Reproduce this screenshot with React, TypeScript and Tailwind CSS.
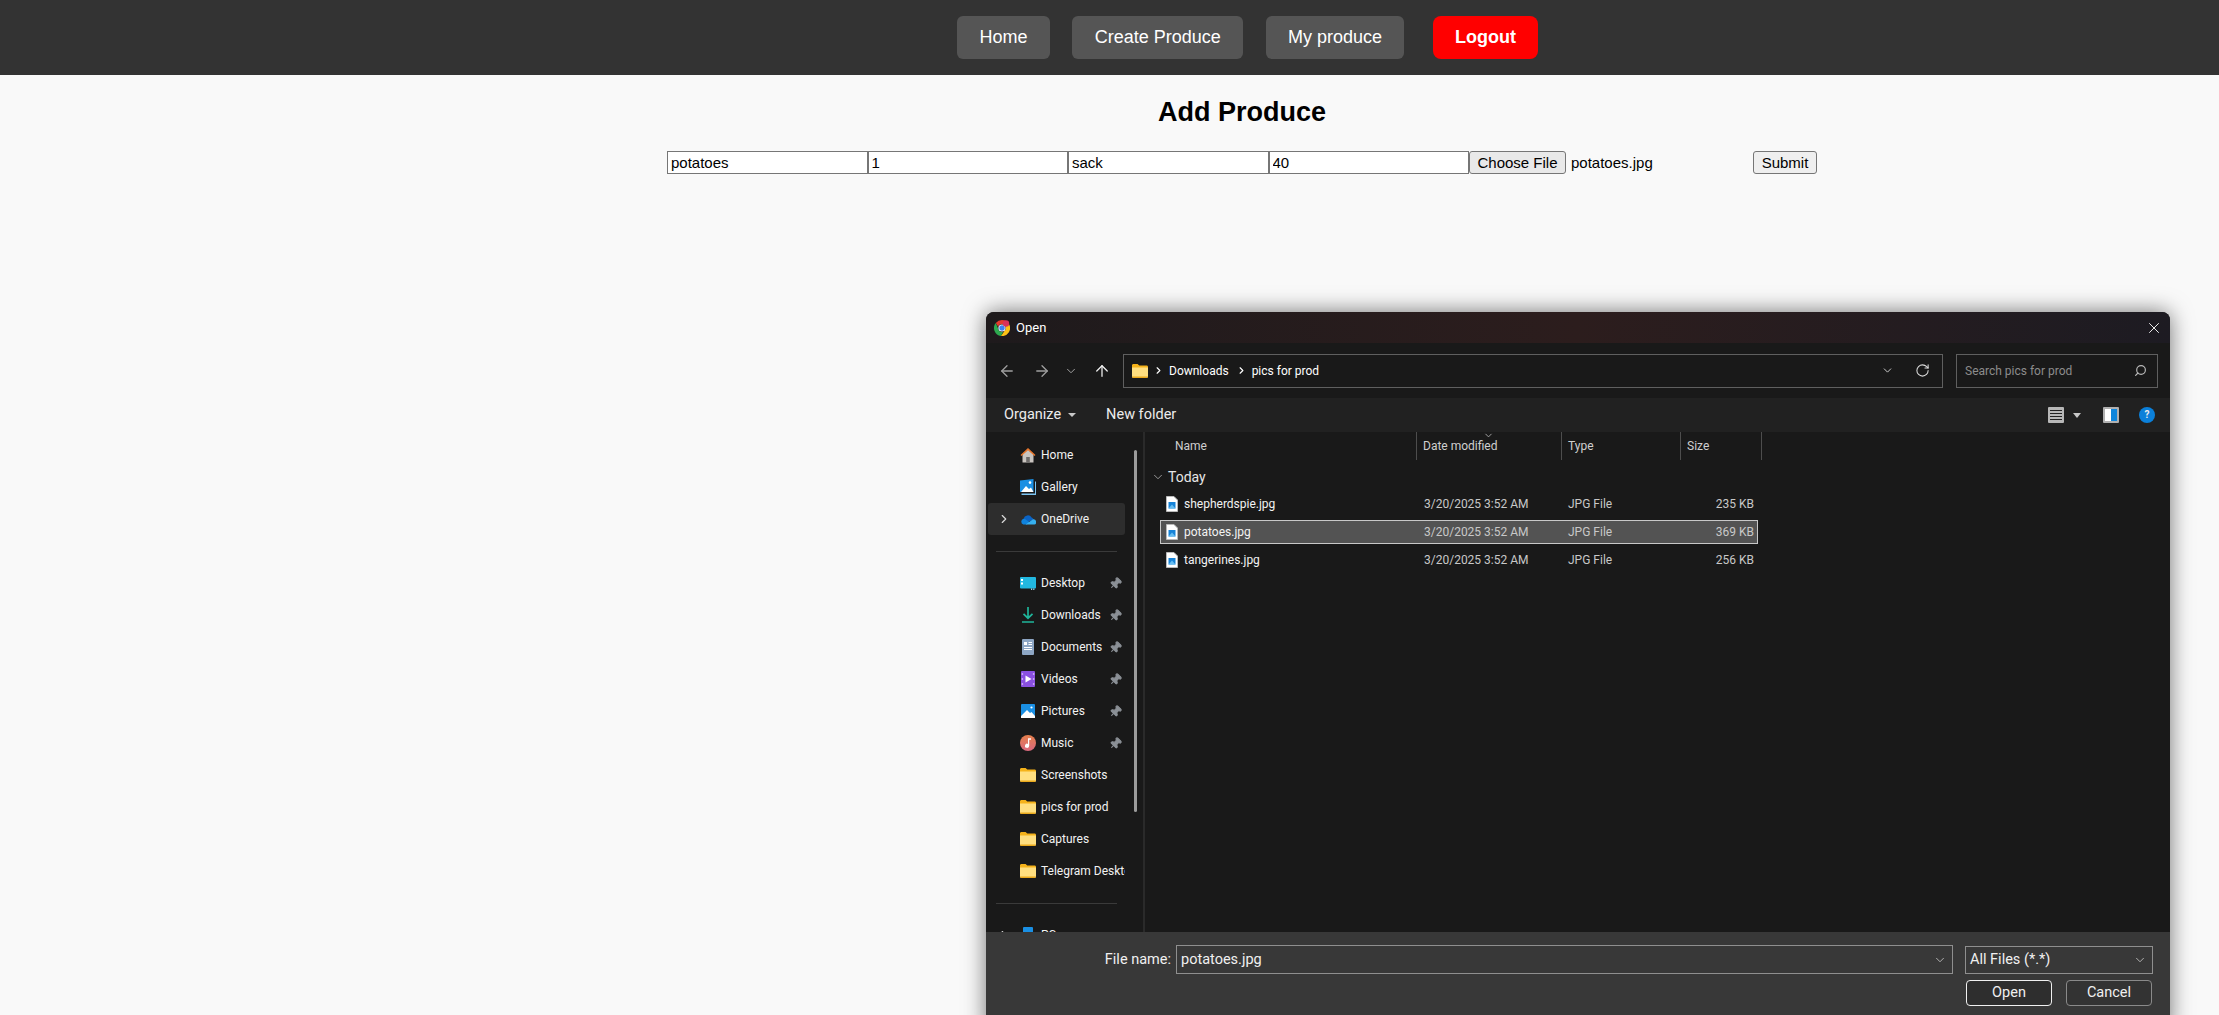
import React from 'react';
import { ArrowLeft, ArrowRight, ArrowUp, ChevronDown, ChevronRight, Pin, RotateCw, Search, X } from 'lucide-react';

const FolderIcon = ({ className = 'w-4 h-[14px]' }: { className?: string }) => (
  <svg viewBox="0 0 16 14" className={className}>
    <path d="M0 1.5C0 .7.6 0 1.4 0h4.2l1.6 1.6h7.4c.8 0 1.4.6 1.4 1.4v1H0z" fill="#f5b21a" />
    <path d="M0 3.4h16v9.2c0 .8-.6 1.4-1.4 1.4H1.4C.6 14 0 13.4 0 12.6z" fill="#ffdf80" />
    <path d="M0 12.6h16c0 .8-.6 1.4-1.4 1.4H1.4C.6 14 0 13.4 0 12.6z" fill="#eaa91c" />
  </svg>
);

const ChromeIcon = () => (
  <svg viewBox="0 0 16 16" className="w-4 h-4 shrink-0">
    <path d="M8 0a8 8 0 0 1 6.93 4H8a4 4 0 0 0-3.8 2.8L1.8 3A8 8 0 0 1 8 0z" fill="#e33b2e" />
    <path d="M1.8 3l3.1 7.4A4 4 0 0 0 9 12l-2 4A8 8 0 0 1 1.8 3z" fill="#2da94f" />
    <path d="M14.93 4A8 8 0 0 1 7 16l3.4-5A4 4 0 0 0 10.8 5z" fill="#fbc116" />
    <circle cx="8" cy="8" r="3.6" fill="#fff" />
    <circle cx="8" cy="8" r="2.7" fill="#3d82f0" />
    <circle cx="12" cy="3.5" r="3.2" fill="#d8325a" />
  </svg>
);

const HomeIcon = () => (
  <svg viewBox="0 0 16 16" className="w-4 h-4">
    <path d="M2.5 7.5 8 2.5l5.5 5v8h-11z" fill="#c9c4bf" />
    <path d="M6.2 10h3.6v5.5H6.2z" fill="#6d6a68" />
    <path d="M.5 8 8 1l7.5 7-1 1L8 3.2 1.5 9z" fill="#e8762c" />
  </svg>
);

const GalleryIcon = () => (
  <svg viewBox="0 0 16 16" className="w-4 h-4">
    <path d="M0 1.5 13.5 0v13H0z" fill="#1a8fe3" />
    <path d="M1 13l5-6 3 3 2-1.5 2.5 4.5z" fill="#fff" />
    <circle cx="10" cy="3.6" r="1.3" fill="#fff" />
    <path d="M1.5 14.5H15V2.5h1V16H1.5z" fill="#7cc4f2" />
  </svg>
);

const CloudIcon = () => (
  <svg viewBox="0 0 16 11" className="w-4 h-[11px]">
    <path d="M3.6 4.8A4.3 4.3 0 0 1 11.6 3.6a3.4 3.4 0 0 1 2 1.8L6.4 8.8z" fill="#0b63c4" />
    <path d="M3.4 10.6A3 3 0 0 1 3.6 4.8c1 0 1.9.4 2.8 1.2l3.4 2.6-3 2z" fill="#0f82dc" />
    <path d="M5.6 10.6 13 5.2a2.8 2.8 0 0 1 1.4 5.4z" fill="#36b0f0" />
  </svg>
);

const DesktopIcon = () => (
  <svg viewBox="0 0 16 13" className="w-4 h-[13px]">
    <rect width="16" height="11.5" rx="1" fill="#22b8e0" />
    <rect x="1" y="2" width="2" height="2" fill="#fff" />
    <rect x="1" y="5.5" width="2" height="2" fill="#fff" />
    <rect x="11" y="11.5" width="1.2" height="1.5" fill="#9fd8ea" />
    <rect x="13.2" y="11.5" width="1.2" height="1.5" fill="#9fd8ea" />
  </svg>
);

const DownloadIcon = () => (
  <svg viewBox="0 0 14 16" className="w-[14px] h-4 mx-px">
    <path d="M7 0v11M2.5 6.8 7 11.2l4.5-4.4M1 15h12" fill="none" stroke="#1fb59a" strokeWidth="1.7" />
  </svg>
);

const DocumentsIcon = () => (
  <svg viewBox="0 0 12 16" className="w-3 h-4 mx-0.5">
    <rect width="12" height="16" rx="1" fill="#8da6c4" />
    <path d="M2 3h3v3H2zM6.5 3H10v1H6.5zM6.5 5H10v1H6.5zM2 8h8v1H2zM2 10h8v1H2z" fill="#fff" />
  </svg>
);

const VideosIcon = () => (
  <svg viewBox="0 0 14 16" className="w-[14px] h-4 mx-px">
    <rect width="14" height="16" rx="1" fill="#8a50e0" />
    <path d="M4.5 4.5 10.5 8l-6 3.5z" fill="#fff" />
    <path d="M.7 2h1.4v2H.7zM.7 7h1.4v2H.7zM.7 12h1.4v2H.7zM11.9 2h1.4v2h-1.4zM11.9 7h1.4v2h-1.4zM11.9 12h1.4v2h-1.4z" fill="#c6a6f5" />
  </svg>
);

const PicturesIcon = () => (
  <svg viewBox="0 0 14 14" className="w-[14px] h-[14px] mx-px">
    <rect width="14" height="14" rx="1" fill="#1a8fe3" />
    <path d="M0 12 6 6l3 3 1.5-1L14 12v2H0z" fill="#fff" />
    <circle cx="10.5" cy="3.5" r="1.1" fill="#fff" />
  </svg>
);

const MusicIcon = () => (
  <svg viewBox="0 0 16 16" className="w-4 h-4">
    <defs>
      <linearGradient id="musicFill" x1="0" y1="0" x2="0" y2="1">
        <stop offset="0" stopColor="#e5804c" />
        <stop offset="1" stopColor="#d9687e" />
      </linearGradient>
    </defs>
    <circle cx="8" cy="8" r="8" fill="url(#musicFill)" />
    <path d="M8 3.2h3v1.6H9.2v6a2.1 2.1 0 1 1-1.2-1.9z" fill="#fff" />
  </svg>
);

const PcIcon = () => (
  <svg viewBox="0 0 10 16" className="w-[10px] h-4 ml-[3px] mr-[3px]">
    <rect width="10" height="16" rx="1" fill="#1a8fe3" />
  </svg>
);

const ImageFileIcon = () => (
  <svg viewBox="0 0 12 16" className="w-3 h-4 shrink-0">
    <path d="M.5.5h7.5l3.5 3.5v11.5H.5z" fill="#fff" stroke="#b9b9b9" />
    <rect x="2.5" y="6" width="7" height="6.5" fill="#1683d8" />
    <path d="M2.5 12.5 6 8.5l3.5 4z" fill="#65bdf2" />
  </svg>
);

const quickAccess = [
  { name: 'Desktop', icon: <DesktopIcon />, pinned: true },
  { name: 'Downloads', icon: <DownloadIcon />, pinned: true },
  { name: 'Documents', icon: <DocumentsIcon />, pinned: true },
  { name: 'Videos', icon: <VideosIcon />, pinned: true },
  { name: 'Pictures', icon: <PicturesIcon />, pinned: true },
  { name: 'Music', icon: <MusicIcon />, pinned: true },
  { name: 'Screenshots', icon: <FolderIcon />, pinned: false },
  { name: 'pics for prod', icon: <FolderIcon />, pinned: false },
  { name: 'Captures', icon: <FolderIcon />, pinned: false },
  { name: 'Telegram Desktop', icon: <FolderIcon />, pinned: false },
];

const files = [
  { name: 'shepherdspie.jpg', size: '235 KB', selected: false },
  { name: 'potatoes.jpg', size: '369 KB', selected: true },
  { name: 'tangerines.jpg', size: '256 KB', selected: false },
];

const NavRow = ({
  name,
  icon,
  expandable,
  active,
  pinned,
}: {
  name: string;
  icon: React.ReactNode;
  expandable?: boolean;
  active?: boolean;
  pinned?: boolean;
}) => (
  <div className={`h-8 flex items-center overflow-hidden rounded-[3px] ${active ? 'bg-[#2d2d2d]' : ''}`}>
    <div className="w-8 shrink-0 pl-[9px]">
      {expandable && <ChevronRight size={14} strokeWidth={2} className="text-[#d8d8d8]" />}
    </div>
    <div className="w-4 shrink-0 flex justify-start mr-[5px]">{icon}</div>
    <span className="whitespace-nowrap text-[#f2f2f2]">{name}</span>
    {pinned && <Pin size={13} strokeWidth={2} className="ml-auto mr-[3px] shrink-0 rotate-45 text-[#8b9096] fill-[#8b9096]" />}
  </div>
);

const Sidebar = () => (
  <div className="relative w-[157px] shrink-0 pl-[2px] pr-[18px] pt-[7px] overflow-hidden text-[12px]">
    <NavRow name="Home" icon={<HomeIcon />} />
    <NavRow name="Gallery" icon={<GalleryIcon />} />
    <NavRow name="OneDrive" icon={<CloudIcon />} expandable active />
    <div className="h-px bg-[#3a3a3a] ml-[8px] mr-[8px] mt-[16px] mb-[15px]" />
    {quickAccess.map((item) => (
      <NavRow key={item.name} name={item.name} icon={item.icon} pinned={item.pinned} />
    ))}
    <div className="h-px bg-[#3a3a3a] ml-[8px] mr-[8px] mt-[16px] mb-[15px]" />
    <NavRow name="PC" icon={<PcIcon />} expandable />
    <div className="absolute left-[148px] top-[18px] w-[3px] h-[362px] bg-[#9b9b9b] rounded-full" />
  </div>
);

const FileList = () => (
  <div className="flex-1 min-w-0 border-l-2 border-[#2a2a2a] text-[12px]">
    <div className="h-[28px] flex text-[#cfcfcf]">
      <div className="w-[272px] pl-[30px] flex items-center border-r border-[#4d4d4d]">Name</div>
      <div className="relative w-[145px] pl-[6px] flex items-center border-r border-[#4d4d4d]">
        Date modified
        <ChevronDown size={11} className="absolute left-[66px] -top-[2px] text-[#a8a8a8]" />
      </div>
      <div className="w-[119px] pl-[6px] flex items-center border-r border-[#4d4d4d]">Type</div>
      <div className="w-[81px] pl-[6px] flex items-center border-r border-[#4d4d4d]">Size</div>
    </div>
    <div className="ml-[6px] mt-[7px] mb-[5px] h-5 flex items-center text-[14px] text-[#e6e6e6]">
      <ChevronDown size={14} strokeWidth={1.5} className="text-[#a8a8a8] mr-[3px]" />
      Today
    </div>
    <div className="ml-[15px] w-[598px] flex flex-col gap-1">
      {files.map((file) => (
        <div
          key={file.name}
          className={`h-6 flex items-center border pl-[5px] ${
            file.selected ? 'bg-[#535353] border-[#c8c8c8]' : 'border-transparent'
          }`}
        >
          <ImageFileIcon />
          <span className="ml-[6px] w-[240px] text-[#f2f2f2]">{file.name}</span>
          <span className="w-[144px] text-[#c8c8c8]">3/20/2025 3:52 AM</span>
          <span className="w-[100px] text-[#c8c8c8]">JPG File</span>
          <span className="flex-1 text-right pr-[3px] text-[#c8c8c8]">{file.size}</span>
        </div>
      ))}
    </div>
  </div>
);

const OpenDialog = () => (
  <div className="absolute left-[986px] top-[312px] w-[1184px] h-[720px] flex flex-col rounded-t-[8px] overflow-hidden bg-[#191919] shadow-[0_0_22px_rgba(0,0,0,0.55)] font-['Roboto',sans-serif] text-[12px] text-white">
    <div className="h-[31px] shrink-0 flex items-center pl-2 pr-[7px] bg-linear-to-r from-[#1e1a1c] via-[#2c1d1d] to-[#1d1b22]">
      <ChromeIcon />
      <span className="ml-[6px] text-[13px]">Open</span>
      <X size={18} strokeWidth={1.3} className="ml-auto text-[#f0f0f0]" />
    </div>

    <div className="h-[55px] shrink-0 flex items-center bg-[#191919]">
      <div className="w-[137px] shrink-0 flex items-center pl-[12px]">
        <ArrowLeft size={18} strokeWidth={1.7} className="text-[#a0a0a0]" />
        <ArrowRight size={18} strokeWidth={1.7} className="ml-[17px] text-[#a0a0a0]" />
        <ChevronDown size={14} strokeWidth={1.7} className="ml-[13px] text-[#a0a0a0]" />
        <ArrowUp size={18} strokeWidth={1.7} className="ml-[15px] text-[#f0f0f0]" />
      </div>
      <div className="w-[820px] h-[34px] flex items-center border border-[#5f5f5f] pl-2 pr-[12px]">
        <FolderIcon />
        <ChevronRight size={11} strokeWidth={2.5} className="ml-[5px]" />
        <span className="ml-[5px]">Downloads</span>
        <ChevronRight size={11} strokeWidth={2.5} className="ml-[7px]" />
        <span className="ml-[5px]">pics for prod</span>
        <ChevronDown size={13} strokeWidth={1.7} className="ml-auto text-[#d8d8d8]" />
        <RotateCw size={15} strokeWidth={1.7} className="ml-[21px] text-[#d8d8d8]" />
      </div>
      <div className="ml-[13px] w-[202px] h-[34px] flex items-center border border-[#5f5f5f] pl-2 pr-[10px] text-[#8c8c8c]">
        Search pics for prod
        <Search size={13} strokeWidth={2.2} className="ml-auto -scale-x-100 text-[#b8b8b8]" />
      </div>
    </div>

    <div className="h-[34px] shrink-0 flex items-center bg-[#212121] pl-[18px] pr-[15px] text-[14.5px] text-[#ececec]">
      <span>Organize</span>
      <span className="ml-[7px] w-0 h-0 border-x-[4px] border-x-transparent border-t-[4px] border-t-[#c8c8c8]" />
      <span className="ml-[30px]">New folder</span>
      <div className="ml-auto flex items-center">
        <div className="w-4 h-4 rounded-[1px] bg-[#b8b8b8] flex flex-col justify-center gap-[2px] px-[2px]">
          <div className="h-px bg-[#222]" />
          <div className="h-px bg-[#222]" />
          <div className="h-px bg-[#222]" />
          <div className="h-px bg-[#222]" />
        </div>
        <span className="ml-[9px] w-0 h-0 border-x-[4px] border-x-transparent border-t-[5px] border-t-[#c8c8c8]" />
        <div className="ml-[22px] w-4 h-4 flex border-2 border-[#b0b0b0] rounded-[1px] bg-white">
          <div className="ml-auto w-[6px] bg-[#0f86dc]" />
        </div>
        <div className="ml-[20px] w-4 h-4 rounded-full bg-[#0b80da] flex items-center justify-center text-[10px] font-bold leading-none">?</div>
      </div>
    </div>

    <div className="h-[500px] shrink-0 flex overflow-hidden bg-[#191919]">
      <Sidebar />
      <FileList />
    </div>

    <div className="flex-1 bg-[#383838] text-[14.5px] text-[#f0f0f0]">
      <div className="flex items-center mt-[13px] h-[29px]">
        <span className="w-[185px] text-right">File name:</span>
        <div className="ml-[5px] w-[777px] h-[29px] flex items-center border border-[#8f8f8f] pl-1 pr-[5px]">
          potatoes.jpg
          <ChevronDown size={14} strokeWidth={1.5} className="ml-auto text-[#c0c0c0]" />
        </div>
        <div className="ml-[12px] w-[188px] h-[28px] flex items-center border border-[#8f8f8f] pl-1 pr-[5px]">
          All Files (*.*)
          <ChevronDown size={14} strokeWidth={1.5} className="ml-auto text-[#c0c0c0]" />
        </div>
      </div>
      <div className="flex justify-end gap-[14px] mt-[6px] pr-[18px]">
        <button className="w-[86px] h-[26px] rounded-[4px] border border-[#f0f0f0] bg-[#2e2e2e]">Open</button>
        <button className="w-[86px] h-[26px] rounded-[4px] border border-[#8a8a8a] bg-[#333333]">Cancel</button>
      </div>
    </div>
  </div>
);

const App: React.FC = () => {
  return (
    <div className="relative h-[1015px] overflow-hidden bg-[#f9f9f9] font-['Liberation_Sans',Arial,sans-serif]">
      <nav className="h-[75px] bg-[#333333] flex items-center pl-[957px] gap-[22.5px] text-[18px] text-white">
        <a className="h-[43px] px-[22.4px] flex items-center rounded-[6px] bg-[#555555]">Home</a>
        <a className="h-[43px] px-[22.4px] flex items-center rounded-[6px] bg-[#555555]">Create Produce</a>
        <a className="h-[43px] px-[22.4px] flex items-center rounded-[6px] bg-[#555555]">My produce</a>
        <a className="ml-[6px] h-[43px] px-[22px] flex items-center rounded-[8px] bg-[#ff0000] font-bold">Logout</a>
      </nav>

      <main className="ml-[667px] w-[1150px]">
        <h2 className="mt-[21px] mb-[22px] leading-[33px] text-center text-[27px] font-bold text-black">Add Produce</h2>
        <form className="flex h-[23px] text-[15px] text-black">
          {['potatoes', '1', 'sack', '40'].map((value) => (
            <input
              key={value}
              readOnly
              value={value}
              className="w-[200.5px] h-[23px] border border-[#767676] bg-white px-[3px] outline-none"
            />
          ))}
          <button type="button" className="w-[97px] h-[23px] border border-[#767676] rounded-[3px] bg-[#e9e9e9]">
            Choose File
          </button>
          <span className="ml-[5px] leading-[23px]">potatoes.jpg</span>
          <button type="button" className="ml-auto w-[64px] h-[23px] border border-[#767676] rounded-[3px] bg-[#efefef]">
            Submit
          </button>
        </form>
      </main>

      <OpenDialog />
    </div>
  );
};

export default App;
